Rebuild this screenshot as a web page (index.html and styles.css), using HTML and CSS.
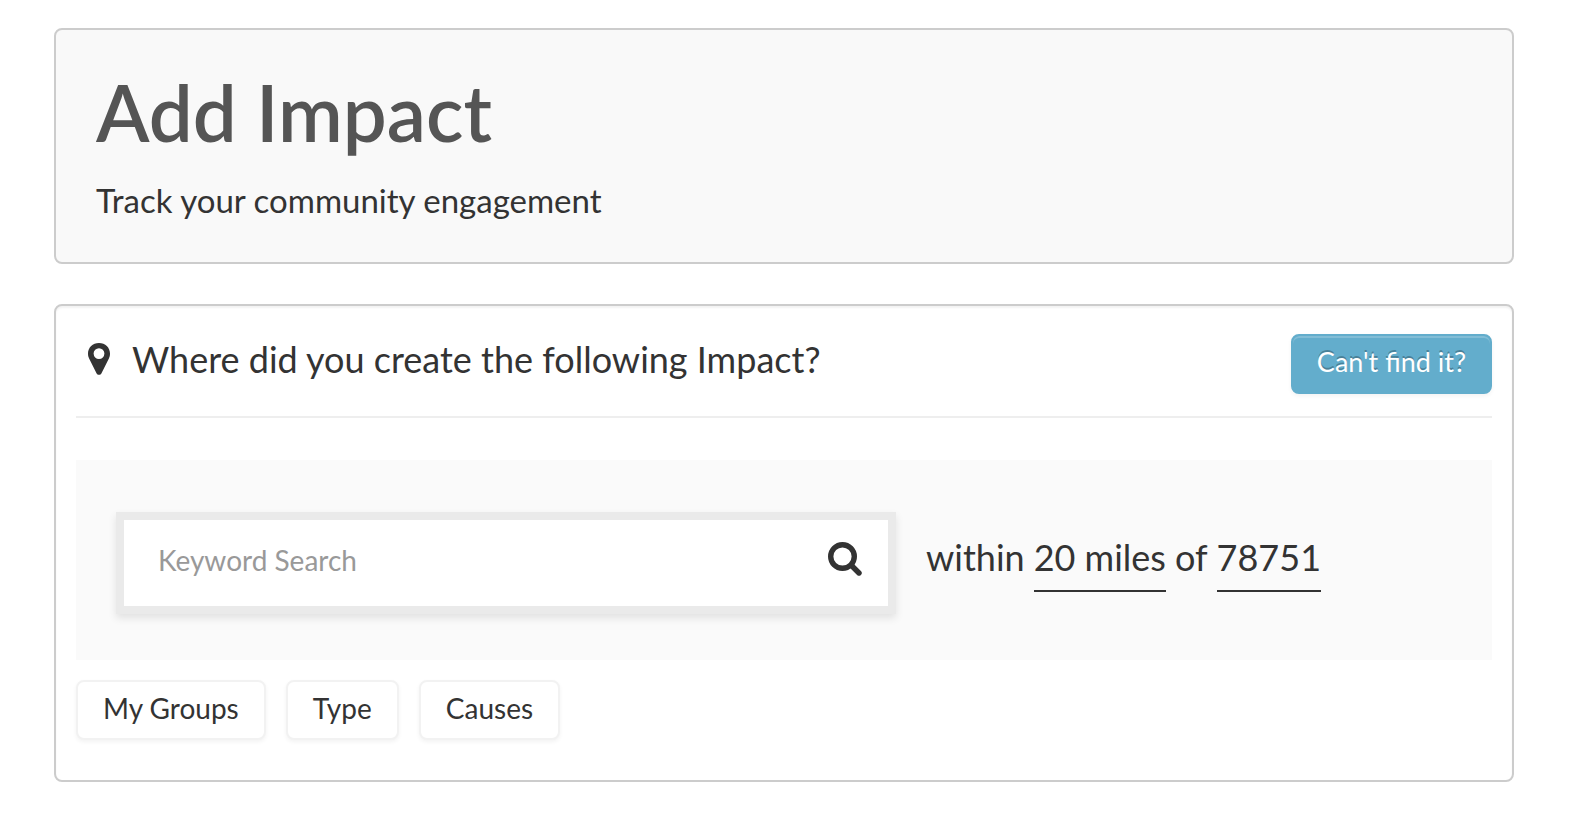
FILE: index.html
```html
<!DOCTYPE html>
<html lang="en">
  <head>
    <meta charset="UTF-8" />
    <meta name="viewport" content="width=device-width, initial-scale=1.0" />
    <title>Add Impact</title>
    <link rel="stylesheet" href="styles.css">
  </head>
  <body>
    <header class="hero">
      <h1 class="hero-title">Add Impact</h1>
      <p class="hero-text">Track your community engagement</p>
    </header>

    <main class="well">
      <div class="well-header">
        <svg class="icon-marker" viewBox="0 0 22 32" aria-hidden="true">
          <path fill-rule="evenodd" d="M11 0C4.700 0 0 4.600 0 10.600c0 2 .400 3.500 1.100 5l7.400 14.600C9 31.200 10 31.700 11 31.700s2-.500 2.500-1.500l7.400-14.600c.700-1.500 1.100-3 1.100-5C22 4.600 17.300 0 11 0zm0 5.200a5.400 5.400 0 1 1 0 10.800 5.400 5.400 0 0 1 0-10.800z"/>
        </svg>
        <h2 class="well-title">Where did you create the following Impact?</h2>
        <button class="btn btn-info" type="button">Can't find it?</button>
      </div>

      <form class="search-panel">
        <div class="search-box">
          <input class="search-input" type="text" placeholder="Keyword Search" aria-label="Keyword Search">
          <button class="search-button" type="submit" aria-label="Search">
            <svg class="icon-search" viewBox="0 0 34 34" aria-hidden="true">
              <circle cx="14.500" cy="14.500" r="11.800" />
              <path d="M23.500 23.500l7.500 7.500" />
            </svg>
          </button>
        </div>
        <div class="location">
          <span>within</span>
          <a class="distance" href="#">20 miles</a>
          <label for="zip">of</label>
          <input class="zip" id="zip" type="text" value="78751">
        </div>
      </form>

      <div class="filters">
        <button class="btn" type="button">My Groups</button>
        <button class="btn" type="button">Type</button>
        <button class="btn" type="button">Causes</button>
      </div>
    </main>
  </body>
</html>
```
FILE: styles.css
```css
* {
  box-sizing: border-box;
}
body {
  margin: 0;
  padding: 28px 58px 48px 54px;
  font-family: Lato, "Liberation Sans", sans-serif;
  color: #333;
  background: #fff;
}
input,
button {
  font-family: inherit;
  color: inherit;
}
.hero {
  margin-bottom: 40px;
  padding: 40px;
  border: 2px solid #ccc;
  border-radius: 8px;
  background: #f9f9f9;
}
.hero-title {
  margin: 0 0 24px;
  font-size: 78px;
  font-weight: 600;
  line-height: 84px;
  color: #555;
}
.hero-text {
  margin: 0;
  font-size: 33px;
  line-height: 44px;
}
.well {
  padding: 28px 20px 40px;
  border: 2px solid #ccc;
  border-radius: 8px;
  box-shadow: inset 0 2px 2px rgba(0, 0, 0, 0.05);
}
.well-header {
  display: flex;
  align-items: flex-start;
  margin-bottom: 42px;
  padding: 0 0 22px 12px;
  border-bottom: 2px solid #eee;
}
.icon-marker {
  width: 22px;
  height: 50px;
  margin-right: 22px;
  fill: #333;
}
.well-title {
  flex: 1;
  margin: 0;
  font-size: 36px;
  font-weight: 400;
  line-height: 50px;
}
.btn {
  height: 60px;
  padding: 0 25px 4px;
  border: 2px solid #f2f2f2;
  border-radius: 8px;
  font-size: 28px;
  line-height: 52px;
  background: #fff;
  box-shadow: 0 2px 4px rgba(0, 0, 0, 0.05);
  cursor: pointer;
}
.btn-info {
  padding: 0 24px 4px;
  border-color: #63adcc;
  font-size: 27px;
  color: #fff;
  background: #63adcc;
  text-shadow: 0 -2px 0 rgba(0, 0, 0, 0.25);
  box-shadow: inset 0 2px 0 rgba(255, 255, 255, 0.2), 0 2px 4px rgba(0, 0, 0, 0.05);
}
.search-panel {
  display: flex;
  align-items: center;
  gap: 30px;
  margin-bottom: 20px;
  padding: 52px 40px 46px;
  background: #fafafa;
}
.search-box {
  display: flex;
  flex: 0 1 780px;
  height: 102px;
  border: 8px solid #eaeaea;
  background: #fff;
  box-shadow: 0 4px 8px rgba(0, 0, 0, 0.1);
}
.search-input {
  flex: 1;
  min-width: 0;
  padding: 0 34px 6px;
  border: 0;
  font-size: 28px;
  background: transparent;
}
.search-input::placeholder {
  color: #999;
  opacity: 1;
}
.search-button {
  display: flex;
  align-items: center;
  padding: 0 26px 8px;
  border: 0;
  background: transparent;
  cursor: pointer;
}
.icon-search {
  width: 34px;
  height: 34px;
  fill: none;
  stroke: #333;
  stroke-width: 5.4;
  stroke-linecap: round;
}
.location {
  display: flex;
  gap: 9px;
  font-size: 36px;
  line-height: 46px;
}
.distance {
  padding-bottom: 10px;
  border-bottom: 2px solid #333;
  color: inherit;
  text-decoration: none;
}
.zip {
  width: 104px;
  height: 58px;
  padding: 0 0 10px;
  border: 0;
  border-bottom: 2px solid #333;
  font-size: 36px;
  line-height: 46px;
  background: transparent;
}
.filters {
  display: flex;
  gap: 20px;
}
```
